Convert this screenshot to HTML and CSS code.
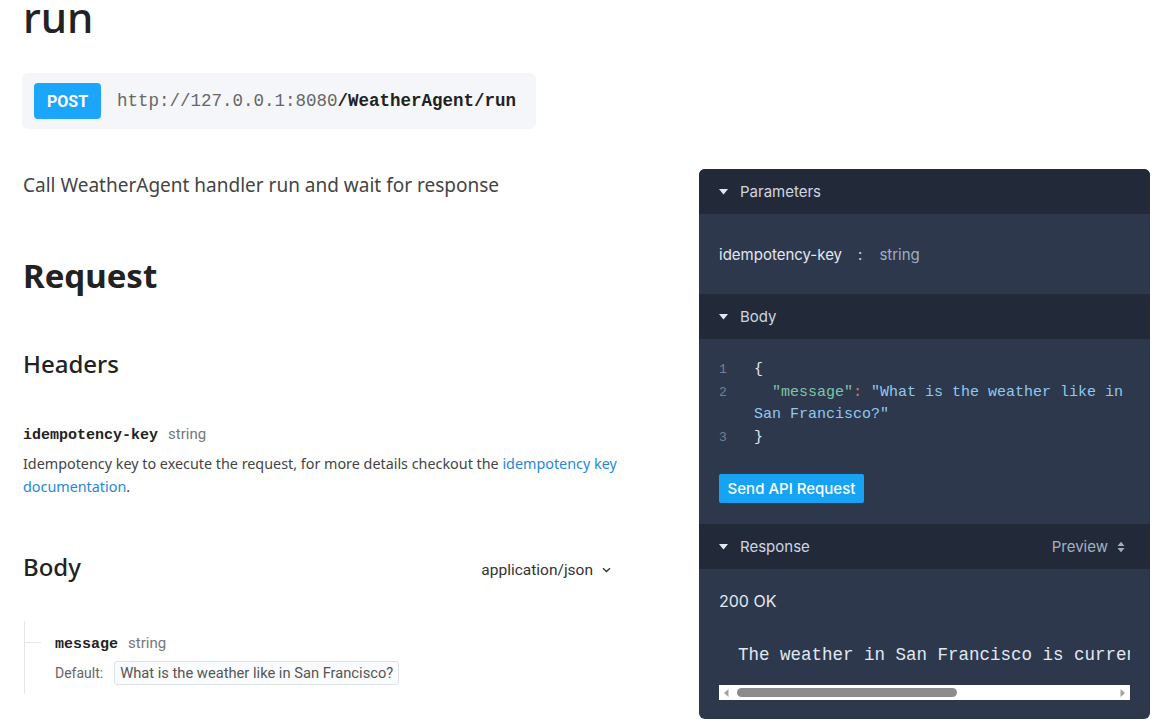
FILE: index.html
```html
<!DOCTYPE html>
<html lang="en">
<head>
<meta charset="utf-8">
<title>run</title>
<link rel="stylesheet" href="styles.css">
</head>
<body>
<div class="page">
  <main class="doc">
    <h1 class="title">run</h1>
    <div class="endpoint">
      <span class="method">POST</span>
      <span class="url"><span class="host">http://127.0.0.1:8080</span><span class="path">/WeatherAgent/run</span></span>
    </div>
    <p class="summary">Call WeatherAgent handler run and wait for response</p>

    <h2 class="h-request">Request</h2>
    <h3 class="h-section">Headers</h3>
    <div class="field">
      <div class="field-head"><span class="field-name">idempotency-key</span><span class="field-type">string</span></div>
      <p class="field-desc">Idempotency key to execute the request, for more details checkout the <a href="#" class="link">idempotency key documentation</a>.</p>
    </div>

    <div class="body-head">
      <h3 class="h-section">Body</h3>
      <div class="ctype">application/json
        <svg class="chev" width="9" height="6" viewBox="0 0 9 6"><path d="M1 1.2 L4.5 4.5 L8 1.2" fill="none" stroke="#333" stroke-width="1.3"/></svg>
      </div>
    </div>

    <div class="tree">
      <div class="tree-row">
        <span class="tree-branch"></span>
        <span class="field-name">message</span><span class="field-type">string</span>
      </div>
      <div class="default-row">
        <span class="default-label">Default:</span>
        <span class="default-val">What is the weather like in San Francisco?</span>
      </div>
    </div>
  </main>

  <aside class="panel">
    <div class="p-head">
      <svg class="tri" width="9" height="6" viewBox="0 0 9 6"><path d="M0 0 H9 L4.5 5.5 Z" fill="#e2e8f0"/></svg>
      <span>Parameters</span>
    </div>
    <div class="p-params">
      <span class="param-name">idempotency-key</span>
      <span class="param-colon">:</span>
      <span class="param-type">string</span>
    </div>

    <div class="p-head">
      <svg class="tri" width="9" height="6" viewBox="0 0 9 6"><path d="M0 0 H9 L4.5 5.5 Z" fill="#e2e8f0"/></svg>
      <span>Body</span>
    </div>
    <div class="p-body">
      <div class="code">
        <span class="ln">1</span><span class="cl">{</span>
        <span class="ln">2</span><span class="cl">  <span class="k">"message"</span><span class="c">:</span> <span class="s">"What is the weather like in San Francisco?"</span></span>
        <span class="ln">3</span><span class="cl">}</span>
      </div>
      <button class="send">Send API Request</button>
    </div>

    <div class="p-head p-head-split">
      <div class="p-head-left">
        <svg class="tri" width="9" height="6" viewBox="0 0 9 6"><path d="M0 0 H9 L4.5 5.5 Z" fill="#e2e8f0"/></svg>
        <span>Response</span>
      </div>
      <div class="preview">Preview
        <svg width="8" height="12" viewBox="0 0 8 12"><path d="M0.5 5 L4 0.8 L7.5 5 Z M0.5 7 L4 11.2 L7.5 7 Z" fill="#a0aec0"/></svg>
      </div>
    </div>
    <div class="p-resp">
      <div class="status">200 OK</div>
      <pre class="resp-text">The weather in San Francisco is currently sunny and 68 degrees.</pre>
      <div class="hscroll">
        <span class="sb-btn"><svg width="5" height="8" viewBox="0 0 5 8"><path d="M4.5 0 V8 L0 4 Z" fill="#a3a3a3"/></svg></span>
        <span class="sb-track"><span class="sb-thumb"></span></span>
        <span class="sb-btn"><svg width="5" height="8" viewBox="0 0 5 8"><path d="M0.5 0 V8 L5 4 Z" fill="#a3a3a3"/></svg></span>
      </div>
    </div>
  </aside>
</div>
</body>
</html>
```

FILE: styles.css
```css
* { box-sizing: border-box; }
html, body { margin: 0; padding: 0; background: #fff; }
body { font-family: "Noto Sans", "DejaVu Sans", sans-serif; color: #222; overflow: hidden; }

.page {
  display: flex;
  align-items: flex-start;
  padding-left: 23px;
  width: 1157px;
  height: 722px;
}

.doc { flex: 0 0 597px; }

.title {
  margin: -9px 0 0 0;
  font-size: 42px;
  line-height: 52px;
  font-weight: 500;
  color: #222;
}

.endpoint {
  margin-top: 30px;
  margin-left: -1px;
  display: flex;
  align-items: center;
  gap: 15px;
  width: 514px;
  height: 56px;
  padding: 0 12px;
  background: #f5f6fa;
  border-radius: 6px;
}
.method {
  display: flex; align-items: center; justify-content: center;
  width: 67px; height: 36px;
  background: #1ba5fb;
  color: #fff;
  border-radius: 4px;
  font-family: Roboto, "Liberation Sans", sans-serif;
  font-weight: 700;
  font-size: 16px;
}
.url { font-family: "Liberation Mono", monospace; font-size: 17.5px; margin-left: 1px; }
.host { color: #666; }
.path { color: #222; font-weight: 700; }

.summary {
  margin: 42px 0 0 0;
  font-size: 19px;
  line-height: 28px;
  color: #444;
}

.h-request {
  margin: 55px 0 0 0;
  font-size: 33px;
  line-height: 44px;
  font-weight: 700;
  color: #222;
}
.h-section {
  margin: 49px 0 0 0;
  font-size: 24px;
  line-height: 34px;
  font-weight: 500;
  color: #222;
}

.field { margin-top: 41px; }
.field-head { line-height: 22px; }
.field-name {
  font-family: "Liberation Mono", monospace;
  font-weight: 700;
  font-size: 15px;
  color: #222;
}
.field-type {
  margin-left: 10px;
  font-family: Roboto, "Liberation Sans", sans-serif;
  font-size: 15px;
  color: #777;
}
.field-desc {
  margin: 5px 0 0 0;
  font-size: 14.35px;
  line-height: 23px;
  color: #444;
}
.link { color: #1e88d8; text-decoration: none; }

.body-head {
  display: flex;
  justify-content: space-between;
  align-items: center;
  width: 588px;
  margin-top: 52px;
}
.body-head .h-section { margin: 0; }
.ctype {
  margin-top: 5px;
  font-family: Roboto, "Liberation Sans", sans-serif;
  font-size: 15.5px;
  color: #333;
  display: flex; align-items: center; gap: 9px;
}

.tree {
  margin-top: 37px;
  margin-left: 1px;
  border-left: 1px solid #e3e6ea;
  padding: 10px 0 9px 30px;
}
.tree-row { position: relative; line-height: 22px; }
.tree-branch {
  position: absolute;
  left: -30px; top: 11px;
  width: 16px; height: 1px;
  background: #e3e6ea;
}
.default-row {
  margin-top: 5px;
  display: flex; align-items: center; gap: 11px;
  font-family: Roboto, "Liberation Sans", sans-serif;
}
.default-label { font-size: 14px; color: #666; }
.default-val {
  font-size: 14.7px;
  color: #555;
  height: 24px;
  line-height: 22px;
  padding: 0 5px;
  border: 1px solid #dde3ea;
  border-radius: 3px;
  background: #fafbfd;
}

/* Right panel */
.panel {
  flex: 0 0 451px;
  margin-left: 79px;
  margin-top: 169px;
  border-radius: 6px;
  overflow: hidden;
  background: #2d384d;
  font-family: Inter, "Noto Sans", sans-serif;
}
.p-head {
  height: 45px;
  background: #222a3a;
  display: flex;
  align-items: center;
  gap: 12px;
  padding: 0 20px;
  font-size: 15px;
  color: #cfd6e0;
}
.p-head-split { justify-content: space-between; padding-right: 24px; }
.p-head-left { display: flex; align-items: center; gap: 12px; }
.preview { display: flex; align-items: center; gap: 9px; color: #a5b0c0; margin-right: 1px; }

.p-params {
  height: 80px;
  display: flex; align-items: center;
  padding: 0 20px;
  font-size: 15px;
}
.param-name { color: #e2e8f0; }
.param-colon { color: #cbd5e0; margin: 0 17px 0 16px; }
.param-type { color: #a0aec0; }

.p-body { padding: 20px 20px 21px 20px; }
.code {
  display: grid;
  grid-template-columns: 35px 376px;
  font-family: "Liberation Mono", monospace;
  font-size: 15px;
  line-height: 22.5px;
  color: #e2e8f0;
}
.ln { color: #718096; font-size: 13px; }
.cl { white-space: pre-wrap; }
.k { color: #7cc6a4; }
.c { color: #f07068; }
.s { color: #90c8f0; }
.send {
  margin-top: 25px;
  display: block;
  height: 29px;
  width: 145px;
  padding: 0;
  border: none;
  border-radius: 2px;
  background: #17a3f4;
  color: #fff;
  font-family: Inter, "Noto Sans", sans-serif;
  font-size: 15px;
  font-weight: 500;
}

.p-resp { padding: 20px 20px 19px 20px; }
.status { font-size: 16px; line-height: 24px; color: #e2e8f0; }
.resp-text {
  margin: 30px 0 0 0;
  padding: 0 19px 18px 19px;
  font-family: "Liberation Mono", monospace;
  font-size: 17.5px;
  line-height: 24px;
  color: #e2e8f0;
  white-space: pre;
  overflow: hidden;
  width: 411px;
}
.hscroll {
  display: flex;
  align-items: center;
  width: 411px;
  height: 15px;
  background: #fff;
}
.sb-btn {
  flex: 0 0 15px;
  height: 15px;
  display: flex; align-items: center; justify-content: center;
}
.sb-track { flex: 1; height: 15px; display: flex; align-items: center; }
.sb-thumb {
  display: block;
  margin-left: 3px;
  width: 220px;
  height: 9px;
  border-radius: 5px;
  background: #8c8c8c;
}
```
